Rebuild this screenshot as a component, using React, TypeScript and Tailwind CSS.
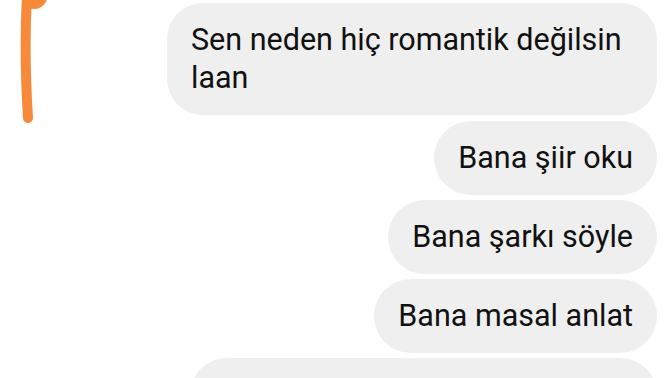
export default function App() {
  return (
    <div
      className="relative h-[378px] w-[672px] overflow-hidden bg-white"
      style={{ fontFamily: "Roboto, 'Noto Sans', sans-serif" }}
    >
      <svg
        className="absolute left-0 top-0"
        width="60"
        height="130"
        viewBox="0 0 60 130"
        fill="none"
      >
        <path
          d="M27 -4 C 25 30, 25 70, 28 118"
          stroke="#f6893a"
          strokeWidth="10"
          strokeLinecap="round"
        />
        <path
          d="M30 4 Q 38 6, 42 0"
          stroke="#f6893a"
          strokeWidth="9"
          strokeLinecap="round"
        />
      </svg>

      <div className="flex flex-col items-end gap-[5px] pr-[15px] pt-[3px] text-[30.5px] leading-[38px] text-[#111111]">
        <div className="mb-[1px] w-[490px] rounded-[36px] bg-[#efefef] py-[18px] pl-6 pr-4">
          Sen neden hiç romantik değilsin laan
        </div>
        <div className="rounded-[37px] bg-[#efefef] px-6 py-[18px]">Bana şiir oku</div>
        <div className="rounded-[37px] bg-[#efefef] px-6 py-[18px]">Bana şarkı söyle</div>
        <div className="rounded-[37px] bg-[#efefef] px-6 py-[18px]">Bana masal anlat</div>
        <div className="h-[74px] w-[467px] rounded-[37px] bg-[#efefef]" />
      </div>
    </div>
  );
}
